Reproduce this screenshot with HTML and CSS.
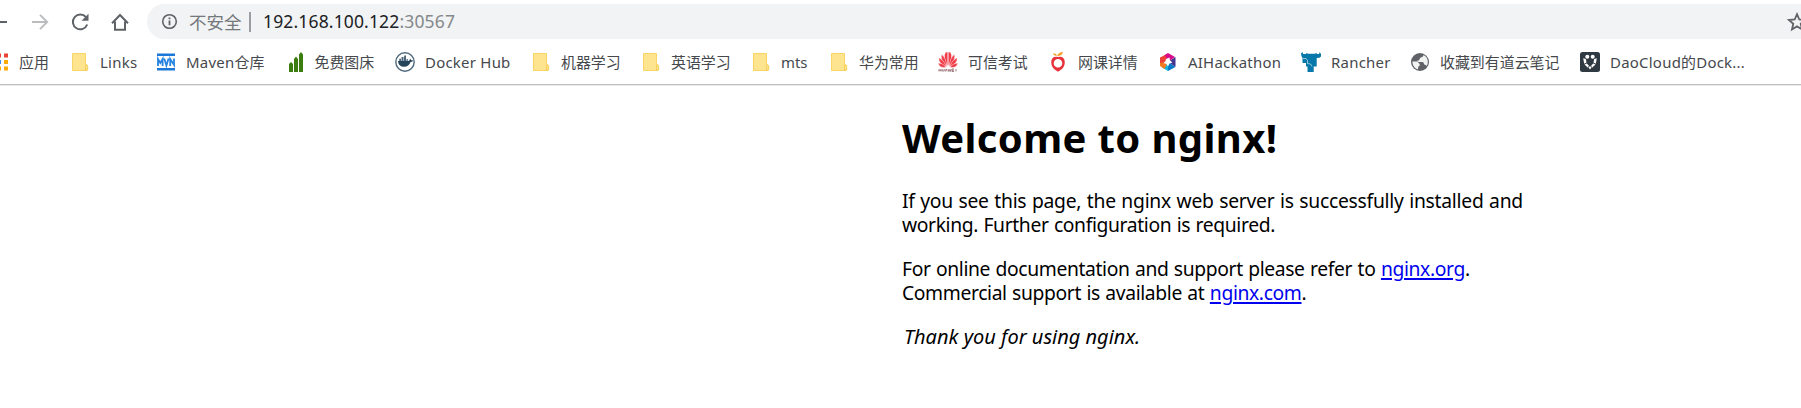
FILE: index.html
```
<!DOCTYPE html>
<html lang="zh-CN">
<head>
<meta charset="utf-8">
<title>Welcome to nginx!</title>
<link rel="stylesheet" href="styles.css">
</head>
<body>
<svg class="defs" width="0" height="0" aria-hidden="true">
  <symbol id="folder" viewBox="0 0 20 20"><path d="M2.500 1.500h13v11.500h1.500v5.500H2.500z" fill="#ffe48f" stroke="#f7d567"/><path d="M15.500 18v-4q0-1.500 1.200-1.200t1 1.500V18z" fill="#ffe48f" stroke="#f3ca4c" stroke-width=".8"/></symbol>
</svg>
<header class="chrome">
  <div class="toolbar">
    <svg class="nav back" viewBox="0 0 20 20"><path d="M18 10H3M9 3l-7 7 7 7" fill="none" stroke="#5f6368" stroke-width="2"/></svg>
    <svg class="nav forward" viewBox="0 0 20 20"><path d="M2 10h15M10 2.800l7.200 7.200-7.200 7.200" fill="none" stroke="#babcbe" stroke-width="1.900"/></svg>
    <svg class="nav reload" viewBox="0 0 20 20"><path d="M16 5.200A7.400 7.400 0 1 0 17.200 12.500" fill="none" stroke="#5f6368" stroke-width="2"/><path d="M18.500 1.800v7h-7z" fill="#5f6368"/></svg>
    <svg class="nav home" viewBox="0 0 20 20"><path d="M2 11.200 10 3l8 8.200M5 9.500v8.200h10V9.500" fill="none" stroke="#5f6368" stroke-width="2"/></svg>
    <div class="omnibox">
      <svg class="info" viewBox="0 0 18 18"><circle cx="9" cy="9" r="7.200" fill="none" stroke="#5f6368" stroke-width="1.700"/><path d="M9 8v5M9 4.800v1.800" stroke="#5f6368" stroke-width="1.900"/></svg>
      <span class="insecure">不安全</span><span class="divider"></span>
      <span class="url">192.168.100.122<span class="port">:30567</span></span>
      <svg class="star" viewBox="0 0 20 20"><path d="m10 2.200 2.300 5.300 5.700.5-4.300 3.800 1.300 5.600-5-3-5 3 1.300-5.600L2 8l5.700-.5z" fill="none" stroke="#5f6368" stroke-width="1.800"/></svg>
    </div>
  </div>
  <nav class="bookmarks">
    <a class="mark"><svg viewBox="0 0 20 20"><path fill="#ea4335" d="M1.500 1.500h4v4h-4zM8 1.500h4v4H8zM15 1.500h4v4h-4z"/><path fill="#34a853" d="M1.500 8h4v4h-4zM1.500 14.500h4v4h-4z"/><path fill="#4285f4" d="M8 8h4v4H8z"/><path fill="#fbab09" d="M15 8h4v4h-4zM8 14.500h4v4H8zM15 14.500h4v4h-4z"/></svg><span>应用</span></a>
    <a class="mark"><svg><use href="#folder"/></svg><span class="latin">Links</span></a>
    <a class="mark"><svg viewBox="0 0 20 20"><path d="M1 1.500h18v2.500H1zM1 16h18v2.500H1z" fill="#1c78d8"/><path d="M2 14V7l2.300 4L6.600 7v7M8.200 6.500l2.200 7 2.200-7M14.200 14V7l3.800 6V6.500" fill="none" stroke="#2684e0" stroke-width="1.800"/></svg><span class="latin">Maven仓库</span></a>
    <a class="mark tight"><svg viewBox="0 0 20 20"><path d="M3 20v-8l2-2 2 2v8zM8 20V7l2-2.500L12 7v13zM13 20V2.500L15 0l2 2.500V20z" fill="#3c7d10"/></svg><span>免费图床</span></a>
    <a class="mark"><svg viewBox="0 0 20 20"><circle cx="10" cy="10" r="9.200" fill="#fff" stroke="#506b7d" stroke-width="1.400"/><path d="M3 9h10q2 0 2-2.500l1.400 1.700 1.800.3q-.8 1.500-2.700 1.500-1.500 4.800-6.500 4.800-5.500 0-6-5.800z" fill="#244459"/><path d="M4.200 6.800H6V9H4.200zM6.500 5h2v4h-2zM9 5h2v4H9zM11.500 7h1.300v2h-1.300zM9.200 3.500H11V5H9.200z" fill="#4c6779"/></svg><span class="latin">Docker Hub</span></a>
    <a class="mark"><svg><use href="#folder"/></svg><span>机器学习</span></a>
    <a class="mark"><svg><use href="#folder"/></svg><span>英语学习</span></a>
    <a class="mark"><svg><use href="#folder"/></svg><span>mts</span></a>
    <a class="mark"><svg><use href="#folder"/></svg><span>华为常用</span></a>
    <a class="mark"><svg viewBox="0 0 20 20"><g fill="#ee3c48" stroke="#fff" stroke-width=".4"><path d="M9.800 14.500Q4.500 5 7.500.3L9.800 0zM10.200 14.500Q15.500 5 12.500.3L10.200 0z"/><path d="M9 14.500Q1.500 7 3.800 2.200q4.500 4.500 5.200 12.300zM11 14.500q7.500-7.500 5.200-12.300-4.500 4.500-5.200 12.300z"/><path d="M8.500 14.800Q-.2 11 1 5.700q5.500 3 7.500 9.100zM11.500 14.800Q20.200 11 19 5.700q-5.500 3-7.500 9.100z"/><path d="M8 15.300Q1.500 16.500.2 11q5.500.4 7.800 4.300zM12 15.300q6.500 1.200 7.800-4.300-5.500.4-7.800 4.300z"/></g><path d="M1 17v2.500M3 17v2.500M1 18.200h2M4.200 17v2h2v-2M7.200 19.500l1-2.500 1 2.500M10 17l.8 2.500.8-2 .8 2 .7-2.500M16 17h-2v2.500h2M14 18.200h2M18 17v2.500" fill="none" stroke="#8f6468" stroke-width=".8"/></svg><span>可信考试</span></a>
    <a class="mark"><svg viewBox="0 0 20 20"><path fill-rule="evenodd" d="M10 5q6.800-1 6.800 5.500-.3 4.500-3.500 7L10 19.800l-3.300-2.300q-3.200-2.500-3.500-7Q3.200 4 10 5zm0 2a4.300 4.300 0 1 0 0 8.600A4.300 4.300 0 0 0 10 7z" fill="#e7323a"/><path d="M9.200 4Q10 .3 15 0 14.500 4 9.200 4zM9 3.800Q5.800 3.800 5 1.200 8.500 1.200 9 3.800z" fill="#f6a02c"/></svg><span>网课详情</span></a>
    <a class="mark"><svg viewBox="0 0 20 20"><path d="M10 1 6 3.300 10 10l7-5z" fill="#d80b89"/><path d="m17.500 5-7.500 5 7.500 5z" fill="#43358f"/><path d="M17.500 15 10 19v-9z" fill="#0878c8"/><path d="M10 19 4 15.500 6 9l4 1z" fill="#18b4de"/><path d="M6.500 17 2 14V9l8 1z" fill="#f47b20"/><path d="M2 11V5.500L7 3l3 7z" fill="#ed4037"/><path d="m11.500 5.500.5 3 2.500 2-3 1-1.500 3-1.500-2.500-3-1 2-2 .5-2z" fill="#fff"/></svg><span class="latin">AIHackathon</span></a>
    <a class="mark"><svg viewBox="0 0 20 20"><path d="M0 1.500 1.500 0l.6 2H5l.7-1.200 1 1h7.500l1-1 .8 1.200h2.200L18.500 0 20 2v2.500q-1 1.500-4.300 1.500v4.500V14.500h-3V20H6.500v-5.500H5V11H1.500V6Q0 4 0 1.500z" fill="#0878aa"/><path d="M2 6.500h3l1.500 2v3l3 .5 1.500 2.500" fill="none" stroke="#a4cfe0" stroke-width=".9"/></svg><span class="latin">Rancher</span></a>
    <a class="mark"><svg viewBox="0 0 20 20"><circle cx="10" cy="10" r="9" fill="#5f6368"/><path d="M11.500 2.500 13.500 3q0 1.800-2 2.200-2 .5-2 2.200-.2 1.200-2.200 1.200-.2 1.500 1.800 1.500h3.200q1.700.1 1.700 2.200 1.400.6 2.800 1.400 1.200-2.200 1-4.500-.6-4.700-4.500-6.200zM2.500 9.500h4.700l2.500 2.500v1.800q-1.500.2-1.500 1.800l-.4 1.800Q3.200 15.800 2.500 11z" fill="#fff" opacity=".92"/></svg><span>收藏到有道云笔记</span></a>
    <a class="mark"><svg viewBox="0 0 20 20"><rect width="20" height="20" rx="2.500" fill="#2f3942"/><g fill="#fff"><circle cx="7.300" cy="4.800" r="2"/><circle cx="12.700" cy="4.800" r="2"/><path d="m3.200 6.200 2.600.8.700 3.500-2.300 1.300zM16.800 6.200l-2.600.8-.7 3.500 2.300 1.300zM4.500 12.500l2.300-1 2 2-.8 2.300zM15.500 12.500l-2.300-1-2 2 .8 2.300zM8.500 15.500l1.500-1.500 1.500 1.500-1.500 2z"/></g></svg><span class="latin">DaoCloud的Dock...</span></a>
  </nav>
</header>
<main class="welcome">
  <h1>Welcome to nginx!</h1>
  <p><span class="lead">If you see this page, the nginx web server is successfully installed and</span><br>working. Further configuration is required.</p>
  <p>For online documentation and support please refer to <a href="#">nginx.org</a>.<br>Commercial support is available at <a href="#">nginx.com</a>.</p>
  <p class="thanks"><em>Thank you for using nginx.</em></p>
</main>
</body>
</html>
```
FILE: styles.css
```
body { margin: 0; height: 408px; overflow: hidden; background: #fff; }
.defs { display: block; height: 0; }
.chrome { box-sizing: border-box; height: 86px; border-bottom: 1px solid #e9e9e9; box-shadow: inset 0 -1px #bfbfbf; overflow: hidden; font-family: "Noto Sans", "Noto Sans CJK SC", sans-serif; }
.toolbar { display: flex; align-items: center; padding-top: 4px; height: 35px; }
.nav { width: 20px; height: 20px; flex: none; }
.back { margin-left: -11px; }
.forward { margin-left: 21px; }
.reload { margin-left: 20px; }
.home { margin-left: 20px; }
.omnibox { display: flex; align-items: center; flex: none; box-sizing: border-box; width: 1700px; height: 35px; margin-left: 17px; padding-left: 14px; border-radius: 18px; background: #f1f3f4; font-size: 17.500px; white-space: nowrap; }
.info { width: 17px; height: 17px; flex: none; }
.insecure { width: 60px; margin-left: 11px; color: #74777b; }
.divider { width: 2px; height: 20px; background: #9b9da0; }
.url { margin: -2px 0 0 12px; width: 1524px; color: #202124; letter-spacing: .15px; }
.port { color: #85888b; }
.star { width: 20px; height: 20px; flex: none; }
.bookmarks { display: grid; grid-template-columns: 81px 86px 130px 109px 136px 110px 110px 78px 109px 110px 110px 143px 109px 170px 180px; align-items: center; height: 46px; margin-left: -11px; width: 1812px; color: #45484c; font-size: 14.950px; }
.mark { display: flex; align-items: center; gap: 10px; white-space: nowrap; }
.tight { gap: 8.500px; }
.mark svg { width: 20px; height: 20px; flex: none; }
.mark span { margin-top: -1px; }
.latin { letter-spacing: .25px; }
.welcome { width: 700px; margin: 24.500px 0 0 902px; color: #000; font: 19.300px/24px "Noto Sans", sans-serif; letter-spacing: -.37px; word-spacing: .8px; white-space: nowrap; }
.welcome h1 { margin: 0; font: bold 40px/54px "Noto Sans", sans-serif; letter-spacing: .37px; word-spacing: 0; }
.welcome p { margin: 0 0 20px; }
.welcome h1 + p { margin-top: 24px; }
.lead { letter-spacing: -.25px; }
.welcome .thanks { padding-left: 2px; font-size: 20px; letter-spacing: 0; word-spacing: 0; }
.welcome a { color: #0000ee; text-decoration-thickness: 2px; text-underline-offset: 2px; }
```
